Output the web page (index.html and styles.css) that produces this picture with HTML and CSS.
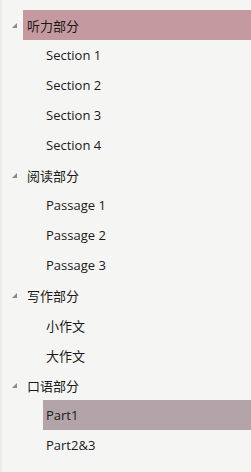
FILE: index.html
```html
<!DOCTYPE html>
<html lang="zh">
<head>
    <meta charset="UTF-8">
    <title>目录</title>
    <link rel="stylesheet" href="styles.css">
</head>
<body>
    <div class="tree">
        <div class="group">
            <div class="node parent selected"><span class="arrow"></span><span class="label">听力部分</span></div>
            <div class="node child"><span class="label">Section 1</span></div>
            <div class="node child"><span class="label">Section 2</span></div>
            <div class="node child"><span class="label">Section 3</span></div>
            <div class="node child"><span class="label">Section 4</span></div>
        </div>
        <div class="group">
            <div class="node parent"><span class="arrow"></span><span class="label">阅读部分</span></div>
            <div class="node child"><span class="label">Passage 1</span></div>
            <div class="node child"><span class="label">Passage 2</span></div>
            <div class="node child"><span class="label">Passage 3</span></div>
        </div>
        <div class="group">
            <div class="node parent"><span class="arrow"></span><span class="label">写作部分</span></div>
            <div class="node child"><span class="label">小作文</span></div>
            <div class="node child"><span class="label">大作文</span></div>
        </div>
        <div class="group">
            <div class="node parent"><span class="arrow"></span><span class="label">口语部分</span></div>
            <div class="node child active"><span class="label">Part1</span></div>
            <div class="node child"><span class="label">Part2&amp;3</span></div>
        </div>
    </div>
</body>
</html>
```

FILE: styles.css
```css
html, body { margin: 0; height: 100%; }
body { background-color: #f5f5f3; font-family: "Segoe UI", "Open Sans", "Noto Sans CJK SC", sans-serif; font-size: 13px; color: #1a1a1a; }
.tree { padding-top: 10px; border-left: 2px solid #ececea; min-height: 462px; }
.node { height: 30px; display: flex; align-items: stretch; white-space: nowrap; }
.label { display: flex; align-items: center; flex: 1; }
.parent { padding-left: 10px; }
.parent .label { padding-left: 4px; }
.child { margin-left: 41px; }
.child .label { padding-left: 3px; }
.arrow { align-self: center; width: 0; height: 0; border-style: solid; border-width: 0 0 5px 5px; border-color: transparent transparent #8a8a8a transparent; margin-right: 6px; }
.selected .label { background-color: #c4999f; }
.active { background-color: #b3a4a9; }
```
